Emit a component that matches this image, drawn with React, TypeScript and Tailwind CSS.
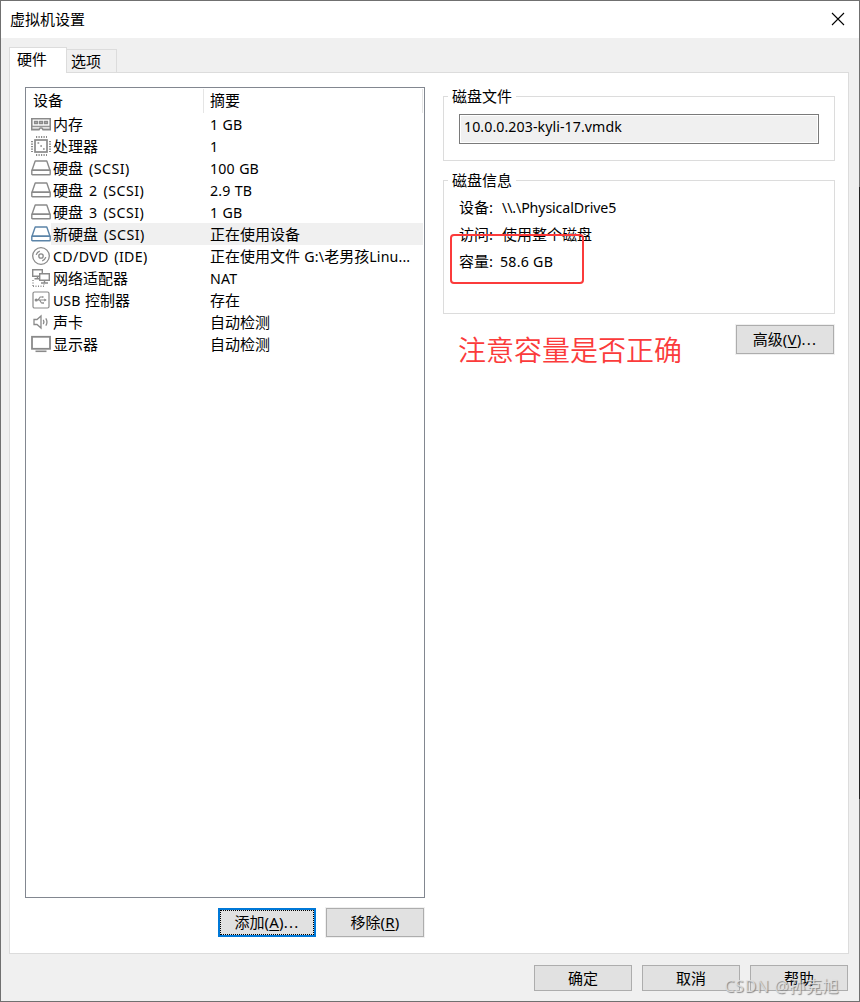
import type { ReactNode } from 'react';

type Device = {
    name: string;
    summary: string;
    icon: ReactNode;
    latin?: string;
    selected?: boolean;
};

const DiskIcon = ({ color = '#8a8a8a' }: { color?: string }) => (
    <svg width="20" height="16" viewBox="0 0 20 16" fill="#fff" stroke={color} strokeWidth="1.4" strokeLinejoin="round">
        <path d="M4.2 1h11.6L19 10.2H1z" />
        <rect x="0.8" y="10.2" width="18.4" height="4.6" rx="0.6" />
    </svg>
);

const MemoryIcon = () => (
    <svg width="20" height="16" viewBox="0 0 20 16" fill="none" stroke="#8a8a8a">
        <path d="M.8 2.8h18.4v10.8H12l-1-1.6H9l-1 1.6H.8z" strokeWidth="1.6" />
        <path d="M3.5 5.5h3v2h-3zM8.5 5.5h3v2h-3zM13.5 5.5h3v2h-3z" fill="#c8c8c8" strokeWidth="1.3" />
        <path d="M1 10.3h18" strokeWidth="1.2" />
        <path d="M2.5 12h5M12.5 12h5" strokeDasharray="1 1" />
    </svg>
);

const CpuIcon = () => (
    <svg width="20" height="20" viewBox="0 0 20 20" fill="none" stroke="#8a8a8a">
        <rect x="4" y="4" width="12" height="12" strokeWidth="1.7" />
        <path d="M5 1h11M5 19h11M1 5v11M19 5v11" strokeWidth="2" strokeDasharray="1.2 1.3" />
        <path d="M6.5 7h1.7M12 13h1.7M9.3 10H11" strokeWidth="1.7" />
    </svg>
);

const DiscIcon = () => (
    <svg width="20" height="20" viewBox="0 0 20 20" fill="none" stroke="#8a8a8a" strokeWidth="1.3">
        <circle cx="10" cy="10" r="8.3" />
        <circle cx="10" cy="10" r="2.2" />
        <path d="M5.2 8.8C5.7 7 7 5.7 8.8 5.2M14.8 11.2c-.5 1.8-1.8 3.1-3.6 3.6" />
    </svg>
);

const NetworkIcon = () => (
    <svg width="20" height="20" viewBox="0 0 20 20" fill="#fff" stroke="#8a8a8a" strokeWidth="1.4">
        <path d="M1.7 1.7h9.6v6.6H1.7zM6.5 8.3v2.5M3.5 10.8h5" />
        <path d="M8.7 5.7h9.6v6.6H8.7zM13.5 12.3V15M10 15h7" />
        <path d="M2 12v6M2 18.3h11v-2" strokeDasharray="1 1.5" fill="none" />
    </svg>
);

const UsbIcon = () => (
    <svg width="20" height="20" viewBox="0 0 20 20" fill="none" stroke="#8a8a8a" strokeWidth="1.2">
        <rect x="2" y="2" width="16" height="16" rx="1.5" />
        <path d="M5 10h9.5M7 10l2.2-3h2M8.5 10l2 3H12" />
        <circle cx="5.2" cy="10" r="1" fill="#8a8a8a" />
        <path d="M13.3 8.5l2.5 1.5-2.5 1.5zM11 6.2h1.5v1.5H11zM11.5 12.2H13v1.5h-1.5z" fill="#8a8a8a" stroke="none" />
    </svg>
);

const SoundIcon = () => (
    <svg width="20" height="20" viewBox="0 0 20 20" fill="none" stroke="#8a8a8a" strokeWidth="1.3">
        <path d="M3 7.5h3L10 4v12l-4-3.5H3z" />
        <path d="M12.3 7.8c.8 1.3.8 3.1 0 4.4M14.8 6.3c1.4 2.2 1.4 5.2 0 7.4" />
    </svg>
);

const DisplayIcon = () => (
    <svg width="20" height="20" viewBox="0 0 20 20" fill="none" stroke="#8a8a8a">
        <rect x="1" y="2.8" width="18" height="12" strokeWidth="1.8" />
        <path d="M4.5 17.3h11" strokeWidth="1.6" />
    </svg>
);

const scsi = 'tracking-[0.5px] [word-spacing:1.7px]';

const devices: Device[] = [
    { name: '内存', summary: '1 GB', icon: <MemoryIcon /> },
    { name: '处理器', summary: '1', icon: <CpuIcon /> },
    { name: '硬盘 (SCSI)', summary: '100 GB', icon: <DiskIcon />, latin: scsi },
    { name: '硬盘 2 (SCSI)', summary: '2.9 TB', icon: <DiskIcon />, latin: scsi },
    { name: '硬盘 3 (SCSI)', summary: '1 GB', icon: <DiskIcon />, latin: scsi },
    { name: '新硬盘 (SCSI)', summary: '正在使用设备', icon: <DiskIcon color="#5b84a8" />, latin: scsi, selected: true },
    { name: 'CD/DVD (IDE)', summary: '正在使用文件 G:\\老男孩Linu...', icon: <DiscIcon />, latin: 'tracking-[0.35px] [word-spacing:1.5px]' },
    { name: '网络适配器', summary: 'NAT', icon: <NetworkIcon /> },
    { name: 'USB 控制器', summary: '存在', icon: <UsbIcon />, latin: '[word-spacing:1px]' },
    { name: '声卡', summary: '自动检测', icon: <SoundIcon /> },
    { name: '显示器', summary: '自动检测', icon: <DisplayIcon /> },
];

// Latin runs are set a little smaller than the 15px Chinese glyphs
function Label({ text, latin = '' }: { text: string; latin?: string }) {
    return (
        <span className="whitespace-pre">
            {text.split(/([\x20-\x7e]+)/).map((part, i) =>
                i % 2 ? <span key={i} className={`text-[14.2px] ${latin}`}>{part}</span> : part
            )}
        </span>
    );
}

function Button({ text, hotkey, tail = '', className = '' }: { text: string; hotkey?: string; tail?: string; className?: string }) {
    return (
        <button className={`relative w-[98px] h-[29px] flex items-center justify-center border border-[#adadad] bg-[#e1e1e1] ${className}`}>
            <span className="leading-5 -mt-px">
                {text}
                {hotkey && (
                    <span className="text-[15px] tracking-[0.2px]">
                        (<span className="underline underline-offset-2">{hotkey}</span>)<span className="tracking-[1.2px]">{tail}</span>
                    </span>
                )}
            </span>
        </button>
    );
}

function Group({ title, className, children }: { title: string; className: string; children: ReactNode }) {
    return (
        <section className={`border border-[#dcdcdc] ${className}`}>
            <h2 className="w-fit h-5 -mt-[11px] ml-1 px-1 leading-5 bg-white">{title}</h2>
            {children}
        </section>
    );
}

export default function App() {
    return (
        <div className="relative w-[860px] h-[1002px] flex flex-col border border-[#707070] bg-[#f0f0f0] text-[15px] leading-[22px] text-black select-none font-['Noto_Sans','Noto_Sans_CJK_SC',sans-serif]">
            <header className="h-[37px] shrink-0 flex items-center justify-between pl-[9px] pr-[14px] bg-white">
                <h1 className="-mt-0.5">虚拟机设置</h1>
                <svg className="-mt-0.5" width="14" height="14" viewBox="0 0 14 14" stroke="#000" strokeWidth="1.1">
                    <path d="M1 1l12 12M13 1L1 13" />
                </svg>
            </header>

            {/* Tabs */}
            <nav className="h-[35px] shrink-0 flex items-end pl-2 relative z-10 -mb-px">
                <div className="w-[58px] h-[26px] pl-[7px] border border-b-0 border-[#dcdcdc] bg-white">硬件</div>
                <div className="w-[50px] h-6 pl-1 border border-l-0 border-[#dcdcdc]">选项</div>
            </nav>

            <main className="h-[882px] w-[840px] shrink-0 ml-2 flex border border-[#dcdcdc] bg-white">
                <div className="ml-[15px] mt-[14px] w-[400px]">
                    <div className="h-[811px] border border-[#828790]">
                        <div className="h-[25px] flex leading-[23px]">
                            <div className="w-[178px] pl-[7px] mt-px border-r border-[#e5e5e5]">设备</div>
                            <div className="flex-1 pl-[6px] mt-px mr-px border-r border-[#e5e5e5]">摘要</div>
                        </div>
                        {devices.map((d) => (
                            <div key={d.name} className="h-[22px] flex items-center">
                                <div className="w-[25px] h-[22px] pl-[5px] shrink-0 flex items-center">{d.icon}</div>
                                <div className={`flex-1 flex h-[22px] mr-px ${d.selected ? 'bg-[#f0f0f0]' : ''}`}>
                                    <div className="w-[159px] pl-[2px]"><Label text={d.name} latin={d.latin} /></div>
                                    <div><Label text={d.summary} latin="tracking-[0.15px] [word-spacing:0.5px]" /></div>
                                </div>
                            </div>
                        ))}
                    </div>
                    <div className="flex justify-end gap-[10px] mt-[10px] pr-px">
                        <Button text="添加" hotkey="A" tail="..." className="border-2 !border-[#0078d7] after:absolute after:inset-0 after:border after:border-dotted after:border-black" />
                        <Button text="移除" hotkey="R" className="outline outline-[#f0f0f0]" />
                    </div>
                </div>

                <div className="ml-[18px] w-[392px] mt-[23px] flex flex-col">
                    <Group title="磁盘文件" className="h-[65px]">
                        <div className="ml-[15px] mt-2 w-[360px] h-[30px] border border-[#7a7a7a] bg-[#f0f0f0] shadow-[inset_0_0_0_1px_#fff] pl-1 leading-[23px]">
                            <Label text="10.0.0.203-kyli-17.vmdk" latin="tracking-[0.07px]" />
                        </div>
                    </Group>

                    <Group title="磁盘信息" className="h-[134px] mt-[19px] relative">
                        <dl className="ml-[15px] mt-1 leading-[27px]">
                            <div className="flex"><dt className="w-[43px]">设备:</dt><dd><Label text="\\.\PhysicalDrive5" latin="tracking-[-0.12px]" /></dd></div>
                            <div className="flex"><dt className="w-[43px]">访问:</dt><dd>使用整个磁盘</dd></div>
                            <div className="flex"><dt className="w-[41px]">容量:</dt><dd><Label text="58.6 GB" latin="tracking-[0.25px]" /></dd></div>
                        </dl>
                        {/* Highlight around the capacity */}
                        <div className="absolute left-[6px] top-[53px] w-[134px] h-[50px] border-2 border-[#fb3b3b] rounded-[4px]" />
                    </Group>

                    <div className="flex justify-between pl-[15px] pr-px mt-[11px]">
                        <p className="text-[28px] leading-[50px] text-[#fb3b3b] font-[350]">注意容量是否正确</p>
                        <Button text="高级" hotkey="V" tail="..." className="outline outline-[#f0f0f0]" />
                    </div>
                </div>
            </main>

            <footer className="relative flex justify-end gap-[10px] pr-[11px] mt-[11px]">
                <Button text="确定" className="!h-[26px]" />
                <Button text="取消" className="!h-[26px]" />
                <Button text="帮助" className="!h-[26px]" />
                <span className="absolute right-[20px] top-[11px] text-base leading-5 tracking-[0.6px] whitespace-nowrap text-[#e4e4e4]/80 [text-shadow:1px_1px_1px_#888]">CSDN @孙克旭</span>
            </footer>

            {/* Darker stretch of the window's right edge */}
            <div className="absolute -right-px top-[186px] w-px h-[612px] bg-[#222]" />
        </div>
    );
}
